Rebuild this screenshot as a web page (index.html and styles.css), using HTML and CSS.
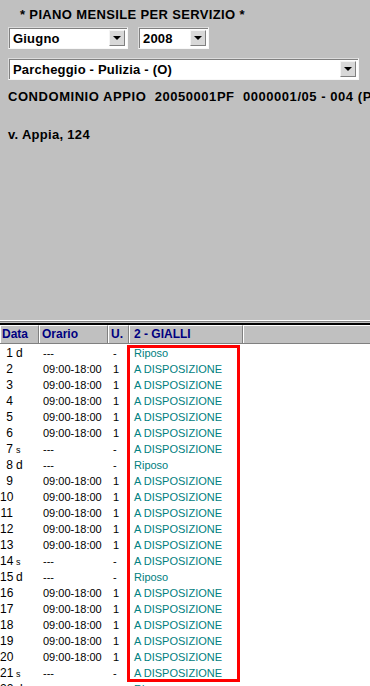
FILE: index.html
```html
<!DOCTYPE html>
<html>
<head>
<meta charset="utf-8">
<link rel="stylesheet" href="styles.css">
</head>
<body>
<div class="panel">
  <div class="title">* PIANO MENSILE PER SERVIZIO *</div>
  <div class="selrow">
    <div class="select w-month"><span class="val">Giugno</span><span class="btn"><i></i></span></div>
    <div class="select w-year"><span class="val">2008</span><span class="btn"><i></i></span></div>
  </div>
  <div class="selrow">
    <div class="select w-full"><span class="val">Parcheggio - Pulizia - (O)</span><span class="btn"><i></i></span></div>
  </div>
  <div class="info">CONDOMINIO APPIO&nbsp; 20050001PF&nbsp; 0000001/05 - 004 (PI</div>
  <div class="addr">v. Appia, 124</div>
</div>
<div class="sep"></div>
<div class="grid">
  <div class="head">
    <div class="hc c1">Data</div>
    <div class="hc c2">Orario</div>
    <div class="hc c3">U.</div>
    <div class="hc c4">2 - GIALLI</div>
    <div class="hc c5"></div>
  </div>
  <div class="body">
    <div class="redbox"></div>
    <div class="row"><span class="c1"><b>1</b> <em>d</em></span><span class="c2">---</span><span class="c3">-</span><span class="c4">Riposo</span></div>
    <div class="row"><span class="c1"><b>2</b></span><span class="c2">09:00-18:00</span><span class="c3">1</span><span class="c4">A DISPOSIZIONE</span></div>
    <div class="row"><span class="c1"><b>3</b></span><span class="c2">09:00-18:00</span><span class="c3">1</span><span class="c4">A DISPOSIZIONE</span></div>
    <div class="row"><span class="c1"><b>4</b></span><span class="c2">09:00-18:00</span><span class="c3">1</span><span class="c4">A DISPOSIZIONE</span></div>
    <div class="row"><span class="c1"><b>5</b></span><span class="c2">09:00-18:00</span><span class="c3">1</span><span class="c4">A DISPOSIZIONE</span></div>
    <div class="row"><span class="c1"><b>6</b></span><span class="c2">09:00-18:00</span><span class="c3">1</span><span class="c4">A DISPOSIZIONE</span></div>
    <div class="row"><span class="c1"><b>7</b> <small>s</small></span><span class="c2">---</span><span class="c3">-</span><span class="c4">A DISPOSIZIONE</span></div>
    <div class="row"><span class="c1"><b>8</b> <em>d</em></span><span class="c2">---</span><span class="c3">-</span><span class="c4">Riposo</span></div>
    <div class="row"><span class="c1"><b>9</b></span><span class="c2">09:00-18:00</span><span class="c3">1</span><span class="c4">A DISPOSIZIONE</span></div>
    <div class="row"><span class="c1"><b>10</b></span><span class="c2">09:00-18:00</span><span class="c3">1</span><span class="c4">A DISPOSIZIONE</span></div>
    <div class="row"><span class="c1"><b>11</b></span><span class="c2">09:00-18:00</span><span class="c3">1</span><span class="c4">A DISPOSIZIONE</span></div>
    <div class="row"><span class="c1"><b>12</b></span><span class="c2">09:00-18:00</span><span class="c3">1</span><span class="c4">A DISPOSIZIONE</span></div>
    <div class="row"><span class="c1"><b>13</b></span><span class="c2">09:00-18:00</span><span class="c3">1</span><span class="c4">A DISPOSIZIONE</span></div>
    <div class="row"><span class="c1"><b>14</b> <small>s</small></span><span class="c2">---</span><span class="c3">-</span><span class="c4">A DISPOSIZIONE</span></div>
    <div class="row"><span class="c1"><b>15</b> <em>d</em></span><span class="c2">---</span><span class="c3">-</span><span class="c4">Riposo</span></div>
    <div class="row"><span class="c1"><b>16</b></span><span class="c2">09:00-18:00</span><span class="c3">1</span><span class="c4">A DISPOSIZIONE</span></div>
    <div class="row"><span class="c1"><b>17</b></span><span class="c2">09:00-18:00</span><span class="c3">1</span><span class="c4">A DISPOSIZIONE</span></div>
    <div class="row"><span class="c1"><b>18</b></span><span class="c2">09:00-18:00</span><span class="c3">1</span><span class="c4">A DISPOSIZIONE</span></div>
    <div class="row"><span class="c1"><b>19</b></span><span class="c2">09:00-18:00</span><span class="c3">1</span><span class="c4">A DISPOSIZIONE</span></div>
    <div class="row"><span class="c1"><b>20</b></span><span class="c2">09:00-18:00</span><span class="c3">1</span><span class="c4">A DISPOSIZIONE</span></div>
    <div class="row"><span class="c1"><b>21</b> <small>s</small></span><span class="c2">---</span><span class="c3">-</span><span class="c4">A DISPOSIZIONE</span></div>
    <div class="row"><span class="c1"><b>22</b> <em>d</em></span><span class="c2">---</span><span class="c3">-</span><span class="c4">Riposo</span></div>
  </div>
</div>
</body>
</html>
```

FILE: styles.css
```css
html, body {
  margin: 0;
  padding: 0;
  background: #ffffff;
  font-family: "Liberation Sans", Arial, sans-serif;
  font-size: 11px;
  color: #000;
  overflow: hidden;
  height: 686px;
}
.panel {
  background: #c0c0c0;
  height: 320px;
  box-sizing: border-box;
  padding: 7px 0 0 8px;
}
.title {
  font-weight: bold;
  font-size: 13px;
  letter-spacing: 0.35px;
  padding-left: 12px;
  height: 20px;
  line-height: 16px;
}
.selrow {
  display: flex;
  gap: 10px;
  margin-bottom: 9px;
}
.select {
  height: 22px;
  box-sizing: border-box;
  background: #fff;
  border-top: 1px solid #dcdcdc;
  border-left: 1px solid #dcdcdc;
  border-bottom: 1px solid #f8f8f8;
  border-right: 1px solid #f8f8f8;
  box-shadow: inset 1px 1px 0 #808080;
  display: flex;
  align-items: center;
  justify-content: space-between;
  padding: 0 2px 0 4px;
}
.w-month { width: 120px; }
.w-year { width: 71px; }
.w-full { width: 351px; }
.val {
  font-weight: bold;
  font-size: 13px;
  letter-spacing: 0.2px;
}
.btn {
  width: 16px;
  height: 16px;
  box-sizing: border-box;
  background: #d8d8d8;
  border-top: 1px solid #f4f4f4;
  border-left: 1px solid #f4f4f4;
  border-right: 1px solid #808080;
  border-bottom: 1px solid #808080;
  display: flex;
  align-items: center;
  justify-content: center;
}
.btn i {
  width: 0;
  height: 0;
  border-left: 4px solid transparent;
  border-right: 4px solid transparent;
  border-top: 4px solid #000;
}
.info {
  font-weight: bold;
  font-size: 13px;
  letter-spacing: 0.55px;
  white-space: nowrap;
  overflow: hidden;
  margin-top: 1px;
  line-height: 16px;
}
.addr {
  font-weight: bold;
  font-size: 13px;
  letter-spacing: 0.3px;
  margin-top: 22px;
  line-height: 16px;
}
.sep {
  height: 5px;
  box-sizing: border-box;
  background: #c0c0c0;
  border-top: 1px solid #fff;
  border-bottom: 2px solid #000;
  box-shadow: inset 0 1px 0 #808080;
}
.head {
  display: flex;
  height: 19px;
  background: #c0c0c0;
  border-bottom: 1px solid #808080;
  box-sizing: border-box;
}
.hc {
  box-sizing: border-box;
  border-top: 1px solid #fff;
  border-left: 1px solid #fff;
  border-right: 1px solid #808080;
  color: #000080;
  font-weight: bold;
  font-size: 12px;
  line-height: 17px;
  padding-left: 2px;
  white-space: nowrap;
}
.hc.c1 { width: 39px; padding-left: 1px; }
.hc.c2 { width: 69px; }
.hc.c3 { width: 21px; }
.hc.c4 { width: 114px; padding-left: 4px; }
.hc.c5 { flex: 1; border-right: none; }
.body {
  position: relative;
  padding-top: 1px;
}
.row {
  display: flex;
  height: 16px;
  line-height: 16px;
  white-space: nowrap;
}
.row .c1 { width: 41px; box-sizing: border-box; }
.row .c1 b {
  font-weight: normal;
  display: inline-block;
  width: 13px;
  text-align: right;
  font-size: 12px;
}
.row .c1 em { font-style: normal; font-size: 12px; }
.row .c1 small { font-size: 9px; }
.row .c2 { width: 70px; box-sizing: border-box; padding-left: 2px; }
.row .c3 { width: 22px; box-sizing: border-box; padding-left: 2px; }
.row .c4 { color: #008080; padding-left: 1px; }
.redbox {
  position: absolute;
  left: 127px;
  top: 1px;
  width: 113px;
  height: 337px;
  box-sizing: border-box;
  border: 3px solid #ff0000;
  pointer-events: none;
}
```
